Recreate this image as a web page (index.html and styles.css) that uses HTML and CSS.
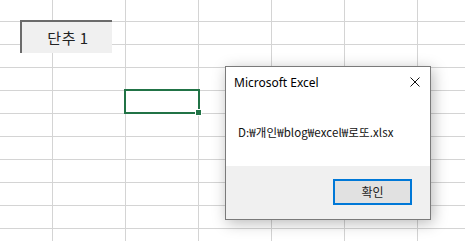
FILE: index.html
```html
<!DOCTYPE html>
<html>
    <head>
        <meta charset="utf-8">
        <title>Microsoft Excel</title>
        <link rel="stylesheet" href="styles.css">
    </head>
    <body>
        <div class="sheet">
            <div class="form-button">단추 1</div>

            <div class="active-cell">
                <span class="fill-handle"></span>
            </div>

            <div class="dialog">
                <div class="title-bar">
                    <span class="title">Microsoft Excel</span>
                    <svg class="close" width="10" height="10" viewBox="0 0 10 10">
                        <path d="M0.5 0.5 L9.5 9.5 M9.5 0.5 L0.5 9.5" stroke="#111" stroke-width="1" fill="none"/>
                    </svg>
                </div>
                <div class="message">D:₩개인₩blog₩excel₩로또.xlsx</div>
                <div class="footer">
                    <button class="ok">확인</button>
                </div>
            </div>
        </div>
    </body>
</html>
```

FILE: styles.css
```css
body {
    margin: 0;
    background-color: white;
    font-family: "Noto Sans", "Noto Sans CJK KR", sans-serif;
}

/* worksheet gridlines */
.sheet {
    position: relative;
    width: 465px;
    height: 241px;
    overflow: hidden;
    background-color: white;
    background-image:
        linear-gradient(to right, #d4d4d4 1px, transparent 1px),
        linear-gradient(to bottom, #d4d4d4 1px, transparent 1px);
    background-size: 73px 100%, 100% 23px;
    background-position: 52px 0, 0 21px;
}

.form-button {
    position: absolute;
    left: 20px;
    top: 20px;
    width: 92px;
    height: 33px;
    box-sizing: border-box;
    background-color: #f0f0f0;
    border-top: 2px solid #6b6b6b;
    border-left: 2px solid #6b6b6b;
    display: flex;
    align-items: center;
    justify-content: center;
    padding-left: 2px;
    font-family: "Noto Sans CJK KR", sans-serif;
    font-size: 15px;
    letter-spacing: 0.5px;
    color: #222;
}

.active-cell {
    position: absolute;
    left: 124px;
    top: 89px;
    width: 76px;
    height: 25px;
    box-sizing: border-box;
    border: 2px solid #217346;
}

.fill-handle {
    position: absolute;
    right: -4px;
    bottom: -4px;
    width: 5px;
    height: 5px;
    background-color: #217346;
    border: 1px solid white;
}

.dialog {
    position: absolute;
    left: 225px;
    top: 66px;
    width: 206px;
    height: 154px;
    box-sizing: border-box;
    border: 1px solid #7a7a7a;
    background-color: white;
    box-shadow: 2px 3px 14px rgba(0, 0, 0, 0.28);
    display: flex;
    flex-direction: column;
}

.title-bar {
    height: 30px;
    display: flex;
    align-items: center;
    justify-content: space-between;
    padding: 0 10px 0 8px;
}

.title {
    font-size: 12px;
    color: #000;
}

.message {
    flex: 1;
    display: flex;
    align-items: center;
    padding-left: 12px;
    font-family: "Noto Sans CJK KR", sans-serif;
    font-size: 11.5px;
    letter-spacing: 0.1px;
    color: #111;
}

.footer {
    height: 53px;
    background-color: #f0f0f0;
    display: flex;
    align-items: center;
    justify-content: flex-end;
    padding-right: 18px;
}

.ok {
    width: 79px;
    height: 26px;
    margin-bottom: 2px;
    background-color: #e1e1e1;
    border: 2px solid #0078d7;
    font-family: "Noto Sans CJK KR", sans-serif;
    font-size: 12px;
    color: #222;
}
```
